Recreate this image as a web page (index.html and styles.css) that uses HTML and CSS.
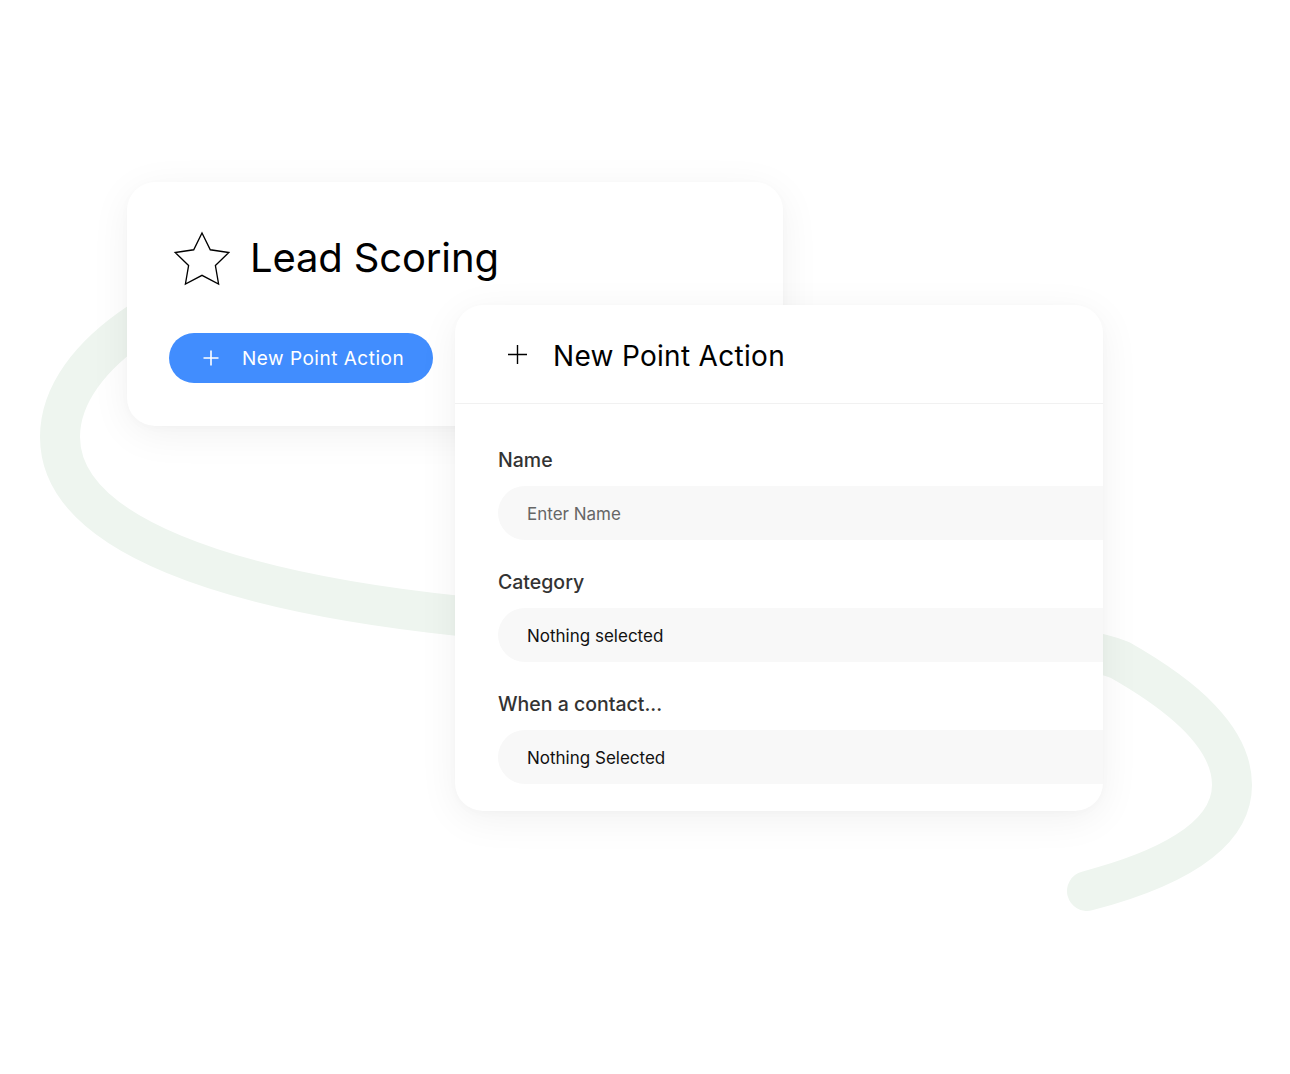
FILE: index.html
```html
<!DOCTYPE html>
<html lang="en">
<head>
<meta charset="utf-8">
<title>Lead Scoring</title>
<link rel="stylesheet" href="styles.css">
</head>
<body>
<div class="stage">
  <svg class="swoosh" width="1290" height="1074" viewBox="0 0 1290 1074" aria-hidden="true">
    <path d="M 140 322 C 90 355 60 395 60 437 C 60 535 230 592 460 616 L 1000 640 C 1060 645 1100 652 1120 660 C 1185 697 1232 738 1232 785 C 1232 840 1160 872 1087 891" fill="none" stroke="#eef5ef" stroke-width="40" stroke-linecap="round"/>
  </svg>

  <section class="card card-lead">
    <div class="lead-head">
      <svg class="star" width="54" height="51" viewBox="2 2 20 19.02" aria-hidden="true">
        <polygon points="12 2 15.09 8.26 22 9.27 17 14.14 18.18 21.02 12 17.77 5.82 21.02 7 14.14 2 9.27 8.91 8.26 12 2" fill="none" stroke="#000" stroke-width="0.5" stroke-linejoin="miter"/>
      </svg>
      <h1 class="lead-title">Lead Scoring</h1>
    </div>
    <button class="btn-primary" type="button">
      <svg class="btn-plus" width="16" height="16" viewBox="0 0 16 16" aria-hidden="true">
        <path d="M8 0.5 V15.5 M0.5 8 H15.5" stroke="#fff" stroke-width="1.6" fill="none"/>
      </svg>
      <span>New Point Action</span>
    </button>
  </section>

  <section class="card card-form">
    <header class="form-head">
      <svg class="head-plus" width="19" height="19" viewBox="0 0 19 19" aria-hidden="true">
        <path d="M9.5 0 V19 M0 9.5 H19" stroke="#000" stroke-width="1.4" fill="none"/>
      </svg>
      <h2 class="form-title">New Point Action</h2>
    </header>
    <div class="form-body">
      <div class="field">
        <label class="field-label">Name</label>
        <div class="field-input placeholder">Enter Name</div>
      </div>
      <div class="field">
        <label class="field-label">Category</label>
        <div class="field-input">Nothing selected</div>
      </div>
      <div class="field">
        <label class="field-label">When a contact...</label>
        <div class="field-input">Nothing Selected</div>
      </div>
    </div>
  </section>
</div>
</body>
</html>
```

FILE: styles.css
```css
* { box-sizing: border-box; }

html, body {
  margin: 0;
  padding: 0;
  background: #ffffff;
}

body {
  font-family: Inter, "Noto Sans", "Liberation Sans", sans-serif;
  color: #000;
}

.stage {
  position: relative;
  width: 1290px;
  height: 1074px;
  display: grid;
  grid-template-columns: 1fr;
  grid-template-rows: 1fr;
  overflow: hidden;
}

.swoosh {
  position: absolute;
  left: 0;
  top: 0;
}

.card {
  grid-area: 1 / 1;
  align-self: start;
  justify-self: start;
  position: relative;
  background: #ffffff;
  border-radius: 28px;
  box-shadow: 0 8px 40px rgba(0, 0, 0, 0.06), 0 2px 10px rgba(0, 0, 0, 0.02);
}

.card-lead {
  margin-left: 127px;
  margin-top: 182px;
  width: 656px;
  height: 244px;
  padding: 50px 0 0 42px;
}

.lead-head {
  display: flex;
  align-items: center;
  gap: 21px;
  padding-left: 6px;
  height: 52px;
}

.star {
  display: block;
  overflow: visible;
  flex: none;
}

.lead-title {
  margin: 0;
  font-size: 40px;
  font-weight: 400;
  letter-spacing: -0.15px;
  line-height: 52px;
  color: #000;
}

.btn-primary {
  margin-top: 49px;
  display: flex;
  align-items: center;
  gap: 23px;
  width: 264px;
  height: 50px;
  padding: 0 0 0 34px;
  border: 0;
  border-radius: 25px;
  background: #418dfe;
  color: #fff;
  font-family: inherit;
  font-size: 19px;
  font-weight: 400;
  letter-spacing: 0.5px;
}

.btn-plus { display: block; flex: none; }

.card-form {
  margin-left: 455px;
  margin-top: 305px;
  width: 648px;
  height: 506px;
  overflow: hidden;
}

.form-head {
  height: 99px;
  display: flex;
  align-items: center;
  gap: 26px;
  padding-left: 53px;
  padding-top: 3px;
  border-bottom: 1px solid #f1f1f1;
}

.head-plus { display: block; flex: none; margin-top: -3px; }

.form-title {
  margin: 0;
  font-size: 28px;
  font-weight: 400;
  letter-spacing: 0.3px;
  line-height: 34px;
  color: #000;
}

.form-body {
  padding: 44px 0 0 43px;
  display: flex;
  flex-direction: column;
  gap: 30px;
}

.field {
  display: flex;
  flex-direction: column;
  gap: 14px;
}

.field-label {
  font-size: 19.5px;
  line-height: 24px;
  font-weight: 500;
  color: #333;
}

.field-input {
  height: 54px;
  margin-right: -40px;
  border-radius: 27px;
  background: #f8f8f8;
  display: flex;
  align-items: center;
  padding-left: 29px;
  padding-top: 2px;
  font-size: 17px;
  color: #111;
}

.field-input.placeholder {
  color: #666;
}
```
